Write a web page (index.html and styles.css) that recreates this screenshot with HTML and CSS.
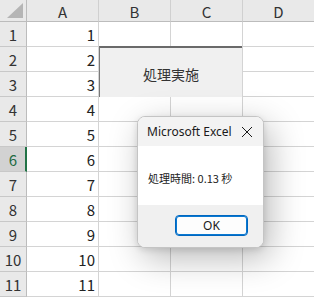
FILE: index.html
```html
<!DOCTYPE html>
<html lang="ja">
<head>
<meta charset="utf-8">
<link rel="stylesheet" href="styles.css">
</head>
<body>
<div class="sheet">
  <div class="grid">
    <div class="hd corner"><span class="tri"></span></div>
    <div class="hd col">A</div>
    <div class="hd col">B</div>
    <div class="hd col">C</div>
    <div class="hd col last">D</div>

    <div class="hd row">1</div><div class="c num">1</div><div class="c"></div><div class="c"></div><div class="c last"></div>
    <div class="hd row">2</div><div class="c num">2</div><div class="c"></div><div class="c"></div><div class="c last"></div>
    <div class="hd row">3</div><div class="c num">3</div><div class="c"></div><div class="c"></div><div class="c last"></div>
    <div class="hd row">4</div><div class="c num">4</div><div class="c"></div><div class="c"></div><div class="c last"></div>
    <div class="hd row">5</div><div class="c num">5</div><div class="c"></div><div class="c"></div><div class="c last"></div>
    <div class="hd row sel">6</div><div class="c num">6</div><div class="c"></div><div class="c"></div><div class="c last"></div>
    <div class="hd row">7</div><div class="c num">7</div><div class="c"></div><div class="c"></div><div class="c last"></div>
    <div class="hd row">8</div><div class="c num">8</div><div class="c"></div><div class="c"></div><div class="c last"></div>
    <div class="hd row">9</div><div class="c num">9</div><div class="c"></div><div class="c"></div><div class="c last"></div>
    <div class="hd row">10</div><div class="c num">10</div><div class="c"></div><div class="c"></div><div class="c last"></div>
    <div class="hd row">11</div><div class="c num">11</div><div class="c"></div><div class="c"></div><div class="c last"></div>
  </div>

  <div class="xbutton">処理実施</div>

  <div class="dialog">
    <div class="dlg-title">
      <span class="dlg-name">Microsoft Excel</span>
      <svg class="dlg-close" width="12" height="12" viewBox="0 0 12 12"><path d="M1 1 L11 11 M11 1 L1 11" stroke="#1a1a1a" stroke-width="1" fill="none"/></svg>
    </div>
    <div class="dlg-body">処理時間: 0.13 秒</div>
    <div class="dlg-foot"><div class="ok">OK</div></div>
  </div>
</div>
</body>
</html>
```
FILE: styles.css
```css
html, body {
  margin: 0;
  padding: 0;
  background: #ffffff;
}
.sheet {
  position: relative;
  width: 314px;
  height: 297px;
  overflow: hidden;
  font-family: "Noto Sans CJK JP", "Noto Sans", sans-serif;
}
.grid {
  display: grid;
  grid-template-columns: 27px 72px 72px 72px 71px;
  grid-template-rows: 22px repeat(11, 25px);
}
.grid > div {
  box-sizing: border-box;
  border-right: 1px solid #d4d4d4;
  border-bottom: 1px solid #d4d4d4;
}
.grid > .last { border-right: none; }
.hd {
  background: #e9e9e9;
  color: #333;
  font-size: 15px;
  display: flex;
  align-items: center;
  justify-content: center;
}
.grid > .hd.col {
  border-right: 1px solid #d0d0d0;
  border-bottom: 1px solid #bcbcbc;
  padding-top: 1px;
}
.grid > .hd.col.last { border-right: none; }
.grid > .hd.row {
  border-right: 1px solid #bcbcbc;
  border-bottom: 1px solid #c8c8c8;
}
.grid > .hd.row.sel {
  background: #d2d2d2;
  color: #1e6b43;
  border-right: 2px solid #217346;
  padding-left: 1px;
}
.grid > .corner {
  border-right: 1px solid #bcbcbc;
  border-bottom: 1px solid #bcbcbc;
  position: relative;
}
.tri {
  position: absolute;
  right: 3px;
  bottom: 3px;
  width: 0;
  height: 0;
  border-left: 16px solid transparent;
  border-bottom: 15px solid #b5b5b5;
}
.c {
  background: #fff;
  color: #222;
  font-size: 15px;
}
.num {
  display: flex;
  align-items: center;
  justify-content: flex-end;
  padding-right: 3px;
}
.xbutton {
  position: absolute;
  left: 99px;
  top: 46px;
  width: 143px;
  height: 51px;
  box-sizing: border-box;
  background: #f0f0f0;
  border-top: 2px solid #6a6a6a;
  border-left: 1px solid #7a7a7a;
  display: flex;
  align-items: center;
  justify-content: center;
  font-size: 14px;
  color: #333;
  padding-top: 2px;
}
.dialog {
  position: absolute;
  left: 137px;
  top: 116px;
  width: 127px;
  height: 132px;
  box-sizing: border-box;
  border: 1px solid #c4c4c4;
  border-radius: 8px;
  overflow: hidden;
  background: #fff;
  box-shadow: 6px 10px 34px rgba(0,0,0,0.28), 0 2px 6px rgba(0,0,0,0.12);
  display: flex;
  flex-direction: column;
  font-family: "Noto Sans", "Noto Sans CJK JP", sans-serif;
}
.dlg-title {
  height: 29px;
  background: #f3f3f3;
  display: flex;
  align-items: center;
  justify-content: space-between;
  padding: 0 10px 0 9px;
}
.dlg-name {
  font-size: 12px;
  color: #1a1a1a;
}
.dlg-close {
  display: block;
}
.dlg-body {
  height: 59px;
  background: #fff;
  font-family: "Noto Sans CJK JP", sans-serif;
  font-size: 11px;
  color: #222;
  padding-left: 10px;
  display: flex;
  align-items: center;
  padding-top: 4px;
  box-sizing: border-box;
}
.dlg-foot {
  flex: 1;
  background: #f0f0f0;
  display: flex;
  align-items: flex-start;
  justify-content: flex-end;
  padding: 10px 15px 0 0;
}
.ok {
  width: 73px;
  height: 21px;
  box-sizing: border-box;
  border: 1px solid #0067c0;
  box-shadow: inset 0 0 0 1px #0a78d0;
  border-radius: 4px;
  background: #fdfdfd;
  font-size: 12px;
  color: #1a1a1a;
  display: flex;
  align-items: center;
  justify-content: center;
}
```
